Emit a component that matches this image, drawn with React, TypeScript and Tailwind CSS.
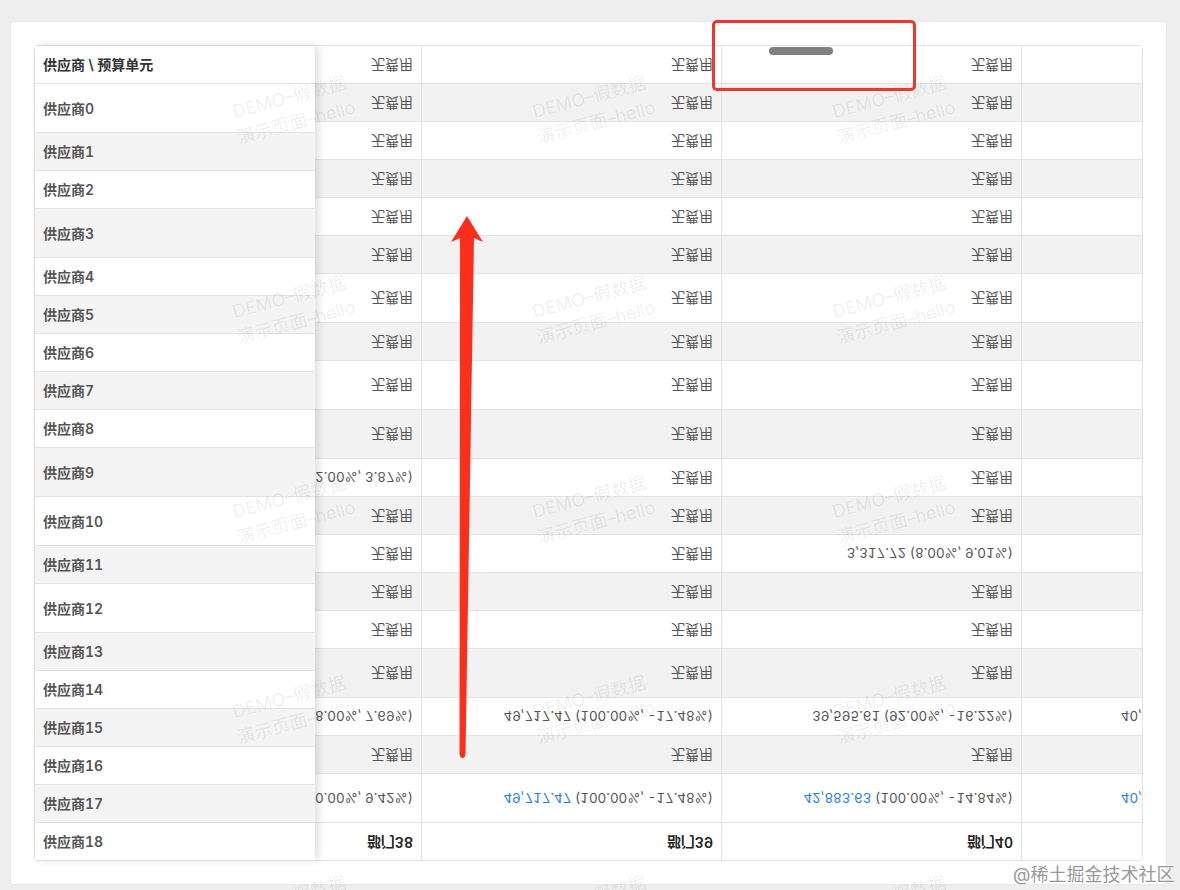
import React from 'react';

const FONT = "font-['Inter','Noto_Sans_CJK_SC',sans-serif]";

interface BodyRow {
  height: string;
  gray?: boolean;
  cells?: string[];
  link?: boolean;
  summary?: boolean;
}

const NONE = '无费用';

// the left column and the body are out of step on purpose, as in the picture
const LEFT_ROWS = [
  { name: '供应商0', height: 'h-[49px] pt-px' },
  { name: '供应商1', height: 'h-[38px]', gray: true },
  { name: '供应商2', height: 'h-[38px]' },
  { name: '供应商3', height: 'h-[49px] pt-px', gray: true },
  { name: '供应商4', height: 'h-[38px]' },
  { name: '供应商5', height: 'h-[38px]', gray: true },
  { name: '供应商6', height: 'h-[38px]' },
  { name: '供应商7', height: 'h-[38px]', gray: true },
  { name: '供应商8', height: 'h-[38px]' },
  { name: '供应商9', height: 'h-[49px] pt-px', gray: true },
  { name: '供应商10', height: 'h-[49px] pt-px' },
  { name: '供应商11', height: 'h-[38px]', gray: true },
  { name: '供应商12', height: 'h-[49px] pt-px' },
  { name: '供应商13', height: 'h-[38px]', gray: true },
  { name: '供应商14', height: 'h-[38px]' },
  { name: '供应商15', height: 'h-[38px]', gray: true },
  { name: '供应商16', height: 'h-[38px]' },
  { name: '供应商17', height: 'h-[38px]', gray: true },
  { name: '供应商18', height: 'h-[38px]' },
];

const BODY_ROWS: BodyRow[] = [
  { height: 'h-[38px]' },
  { height: 'h-[38px]', gray: true },
  { height: 'h-[38px]' },
  { height: 'h-[38px]', gray: true },
  { height: 'h-[38px]' },
  { height: 'h-[38px]', gray: true },
  { height: 'h-[49px]' },
  { height: 'h-[38px]', gray: true },
  { height: 'h-[49px]' },
  { height: 'h-[49px]', gray: true },
  { height: 'h-[38px]', cells: ['1,994.37 (2.00%, 3.87%)', NONE, NONE, ''] },
  { height: 'h-[38px]', gray: true },
  { height: 'h-[38px]', cells: [NONE, NONE, '3,317.72 (8.00%, 9.01%)', ''] },
  { height: 'h-[38px]', gray: true },
  { height: 'h-[38px]' },
  { height: 'h-[49px]', gray: true },
  {
    height: 'h-[38px]',
    cells: [
      '3,977.11 (8.00%, 7.69%)',
      '49,717.47 (100.00%, -17.48%)',
      '39,595.61 (92.00%, -16.22%)',
      '40,717.47 (92.00%, -1.22%)',
    ],
  },
  { height: 'h-[38px]', gray: true },
  {
    height: 'h-[49px]',
    link: true,
    cells: [
      '49.72 (0.00%, 9.42%)',
      '49,717.47 (100.00%, -17.48%)',
      '42,883.63 (100.00%, -14.84%)',
      '40,717.47 (92.00%, -1.22%)',
    ],
  },
  { height: 'h-[38px]', summary: true, cells: ['部门38', '部门39', '部门40', ''] },
];

const WATERMARKS = [80, 280, 480, 680, 880].flatMap((top) =>
  [232, 532, 832].map((left) => ({ top, left })),
);

const Amount: React.FC<{ text: string; link?: boolean }> = ({ text, link }) => {
  const at = text.indexOf(' (');
  if (at < 0) return <>{text}</>;
  if (!link) return <span className="text-[13.4px]">{text}</span>;
  return (
    <span className="text-[13.4px]">
      <span className="text-[#1f7fe0]">{text.slice(0, at)}</span>
      {text.slice(at)}
    </span>
  );
};

const Cell: React.FC<{ row: BodyRow; text: string }> = ({ row, text }) => (
  <div className="flex h-full w-[300px] shrink-0 items-center justify-end whitespace-nowrap border-r border-[#e3e3e3] pr-2">
    <span className={`inline-block -scale-y-100 tabular-nums ${row.summary ? 'font-semibold text-[#222]' : 'text-[#555]'}`}>
      <Amount text={text} link={row.link} />
    </span>
  </div>
);

export default function App() {
  return (
    <div className={`relative h-[890px] w-[1180px] overflow-hidden bg-[#eeeeee] pl-[10px] pt-[21px] text-sm ${FONT}`}>
      <div className="h-[864px] w-[1157px] rounded-sm border border-[#e8e8e8] bg-white pl-[23px] pt-[23px]">
        <div className="flex h-[816px] w-[1109px] rounded-sm border border-[#e3e3e3]">
          <div className="relative z-10 w-[280px] shrink-0 bg-white shadow-[3px_0_8px_rgba(0,0,0,0.14)]">
            <div className="flex h-[38px] items-center border-b border-[#e3e3e3] pl-2 font-semibold text-[#333]">
              供应商 \ 预算单元
            </div>
            {LEFT_ROWS.map((row) => (
              <div
                key={row.name}
                className={`flex items-center border-b border-[#e3e3e3] pl-2 font-semibold tabular-nums text-[#555] ${row.height} ${row.gray ? 'bg-[#f4f4f4]' : 'bg-white'}`}
              >
                {row.name}
              </div>
            ))}
          </div>

          <div className="min-w-0 flex-1 overflow-hidden">
            <div className="-ml-[193px] w-[1200px]">
              {BODY_ROWS.map((row, i) => (
                <div
                  key={i}
                  className={`flex border-b border-[#e3e3e3] ${row.height} ${row.gray ? 'bg-[#f2f2f2]' : 'bg-white'}`}
                >
                  {(row.cells ?? [NONE, NONE, NONE, '']).map((text, j) => (
                    <Cell key={j} row={row} text={text} />
                  ))}
                </div>
              ))}
            </div>
          </div>
        </div>
      </div>

      {WATERMARKS.map(({ top, left }) => (
        <div
          key={`${top}-${left}`}
          className="pointer-events-none absolute z-20 flex -rotate-[15deg] flex-col items-center whitespace-nowrap text-lg leading-[26px] text-black/[0.08]"
          style={{ top: top + 4, left }}
        >
          <span>DEMO–假数据</span>
          <span>演示页面–hello</span>
        </div>
      ))}

      <div className="pointer-events-none absolute left-[712px] top-[20px] z-30 h-[71px] w-[204px] rounded-[5px] border-[3px] border-[#ea3a2d]" />
      <div className="absolute left-[769px] top-[47px] z-30 h-2 w-16 rounded-full bg-[#808080]" />

      <svg className="pointer-events-none absolute left-[440px] top-[205px] z-30" width="50" height="560" viewBox="0 0 50 560" fill="none">
        <path
          d="M27 11 L43 37 L34 33 L25.5 549 Q25 553 22.5 553 Q20 553 19.5 549 L20 33 L11 37 Z"
          fill="#fb2f1c"
        />
      </svg>

      <div className="absolute left-[1013px] top-[863px] z-30 text-lg leading-6 text-[#999] [text-shadow:0_0_3px_#fff]">
        @稀土掘金技术社区
      </div>
    </div>
  );
}
